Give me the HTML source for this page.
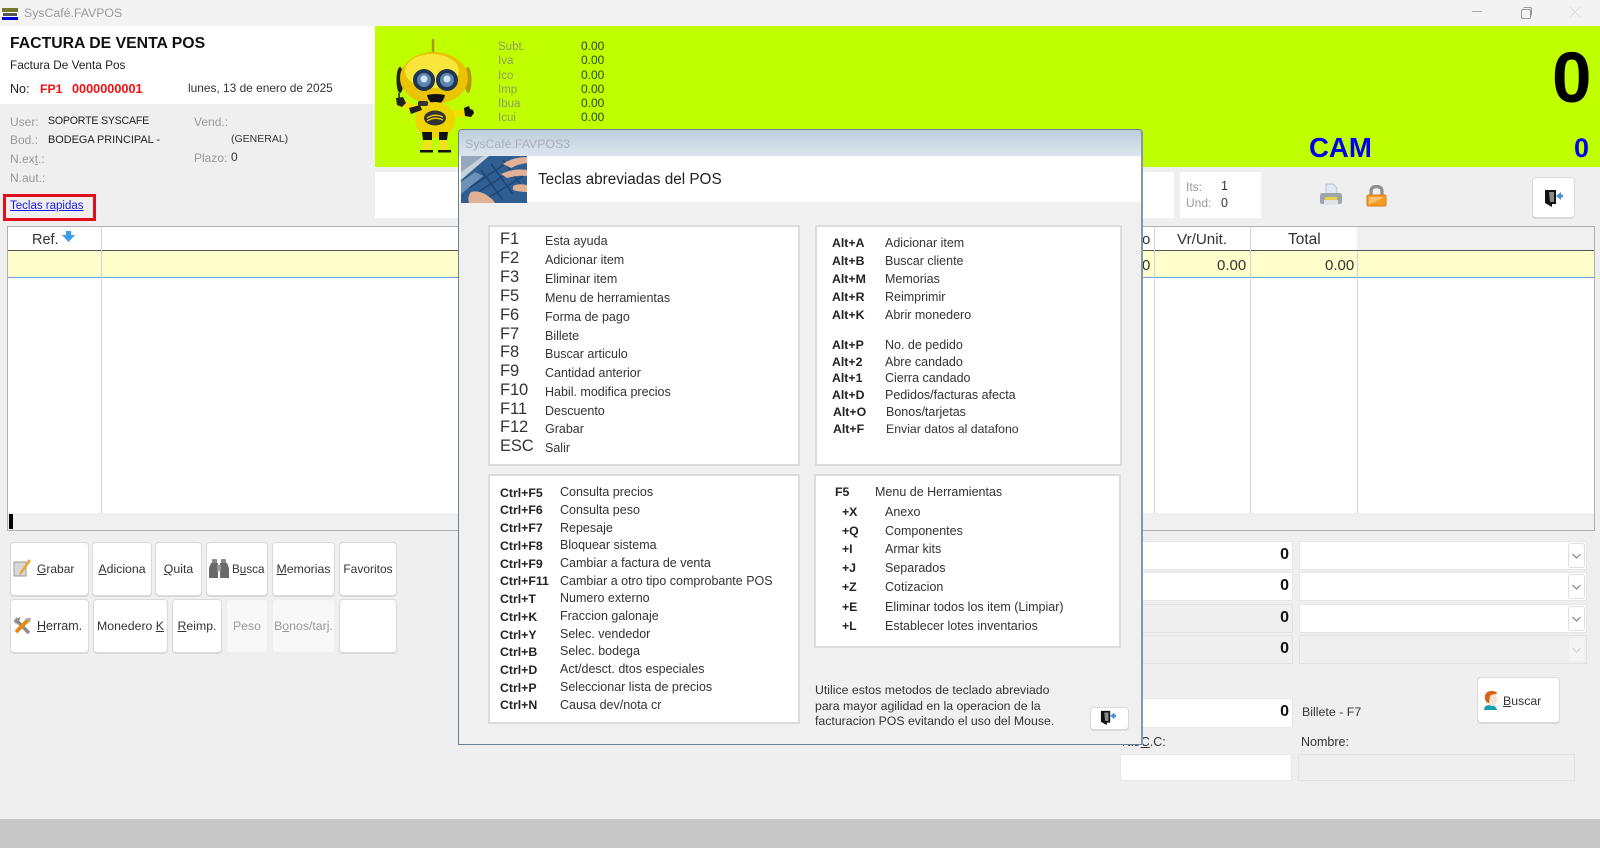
<!DOCTYPE html>
<html lang="es"><head><meta charset="utf-8"><title>SysCafé.FAVPOS</title>
<style>
html,body{margin:0;padding:0;background:#efefef}
body{width:1600px;height:848px;position:relative;overflow:hidden;font-family:"Liberation Sans",sans-serif;font-size:12.5px;color:#333}
#r{position:absolute;left:0;top:0;width:1600px;height:848px;background:#efefef;overflow:hidden;filter:blur(.3px)}
div,svg{position:absolute}
.t{position:absolute;line-height:16px;white-space:nowrap}
.g{color:#999}.b{font-weight:bold;color:#222;font-size:12.3px}
.k{font-size:16.5px;color:#333;letter-spacing:-.1px}
.btn{background:#fff;border:1px solid #dadada;border-radius:4px;box-sizing:border-box;box-shadow:0 1px 0 #d8d8d8}
.dis{background:#f8f8f8;box-shadow:none;border-color:#eee}
.lbl{position:absolute;left:0;right:0;top:50%;margin-top:-8px;line-height:16px;text-align:center;white-space:nowrap;color:#333;font-size:12.3px}
.p{background:#fff;border:2px solid #dcdcdc;box-sizing:border-box}
.in{box-sizing:border-box;border:1px solid #e6e6e6;background:#fff}
.gr{background:#efefef;border:1px solid #e2e2e2}
.num{position:absolute;right:3px;top:50%;margin-top:-10px;font-weight:bold;font-size:16px;line-height:18px;color:#111}
.dd{box-sizing:border-box;background:#fff;border:1px solid #e0e0e0;border-radius:3px}
.v{background:#ccd3da;width:1px}
.lb{font-size:11.5px;color:#8f9c62}
.val{font-size:12px;color:#2f4a00}
</style></head><body><div id="r">

<!-- title bar -->
<div style="left:0;top:0;width:1600px;height:26px;background:#f3f3f3"></div>
<div style="left:2px;top:8px;width:16px;height:4px;background:#77772a"></div>
<div style="left:2px;top:12px;width:16px;height:5px;background:#fff"></div>
<div style="left:3px;top:13px;width:14px;height:3px;background:#555"></div>
<div style="left:2px;top:17px;width:16px;height:3px;background:#0000d8"></div>
<span class="t" style="left:24px;top:5px;color:#9a9a9a;font-size:12.3px">SysCafé.FAVPOS</span>
<div style="left:1472px;top:11px;width:10px;height:1px;background:#aaa"></div>
<div style="left:1521px;top:9px;width:8px;height:8px;border:1px solid #999;border-radius:2px"></div>
<div style="left:1523px;top:7px;width:8px;height:8px;border-top:1px solid #999;border-right:1px solid #999;border-radius:2px"></div>
<svg style="left:1570px;top:7px" width="10" height="10"><path d="M0 0L10 10M10 0L0 10" stroke="#ddd" stroke-width="1"/></svg>

<!-- header left -->
<div style="left:0;top:26px;width:375px;height:78px;background:#fff"></div>
<span class="t" style="left:10px;top:36px;font-size:15.8px;font-weight:bold;color:#111">FACTURA DE VENTA POS</span>
<span class="t" style="left:10px;top:57px;font-size:11.8px;color:#222">Factura De Venta Pos</span>
<span class="t" style="left:10px;top:81px;font-size:12.5px;color:#222">No:</span>
<span class="t" style="left:40px;top:81px;font-size:12.2px;font-weight:bold;color:#f01010">FP1</span>
<span class="t" style="left:72px;top:81px;font-size:12.7px;font-weight:bold;color:#f01010">0000000001</span>
<span class="t" style="left:188px;top:80px;font-size:11.9px;color:#333">lunes, 13 de enero de 2025</span>

<span class="t g" style="left:10px;top:114px;font-size:12px">User:</span>
<span class="t" style="left:48px;top:113px;font-size:10.6px;letter-spacing:-.2px;color:#222">SOPORTE SYSCAFE</span>
<span class="t g" style="left:194px;top:114px;font-size:12px">Vend.:</span>
<span class="t g" style="left:10px;top:132px;font-size:12px">Bod.:</span>
<span class="t" style="left:48px;top:132px;font-size:10.9px;color:#222">BODEGA PRINCIPAL -</span>
<span class="t" style="left:231px;top:131px;font-size:10.5px;color:#333">(GENERAL)</span>
<span class="t g" style="left:10px;top:151px;font-size:12px">N.ex<u>t</u>.:</span>
<span class="t g" style="left:194px;top:150px;font-size:12px">Plazo:</span>
<span class="t" style="left:231px;top:149px;font-size:12px;color:#333">0</span>
<span class="t g" style="left:10px;top:170px;font-size:12px">N.aut.:</span>

<div style="left:3px;top:194px;width:93px;height:27px;border:3px solid #e2101e;box-sizing:border-box"></div>
<span class="t" style="left:10px;top:198px;font-size:11.5px;color:#1a1aee;text-decoration:underline">Teclas rapidas</span>

<!-- green -->
<div style="left:375px;top:26px;width:1225px;height:141px;background:#bfff00"></div>
<svg style="left:395px;top:38px" width="80" height="118" viewBox="0 0 80 118">
 <path d="M38 1v13" stroke="#a89a10" stroke-width="2.500"/><path d="M27 17q11-4 22 0" stroke="#222" stroke-width="2" fill="none"/>
 <ellipse cx="5" cy="42" rx="3.500" ry="13" fill="#222"/><ellipse cx="73" cy="42" rx="3.500" ry="13" fill="#b89a00"/>
 <path d="M4 55q0 6 1 9" stroke="#222" stroke-width="1.500" fill="none"/>
 <path d="M7 63q10 12 24 3" stroke="#f4e000" stroke-width="7" fill="none"/>
 <path d="M1 60l7-1 3 6-4 4-5-2z" fill="#222"/>
 <ellipse cx="39" cy="40" rx="34" ry="26" fill="#eac400"/><ellipse cx="37" cy="33" rx="27" ry="17" fill="#f8e63c"/>
 <circle cx="29" cy="42" r="11" fill="#1f3552"/><circle cx="29" cy="42" r="7" fill="#5d86b0"/><circle cx="29" cy="41" r="3.500" fill="#cfe6f4"/>
 <circle cx="52" cy="42" r="11" fill="#1f3552"/><circle cx="52" cy="42" r="7" fill="#5d86b0"/><circle cx="52" cy="41" r="3.500" fill="#cfe6f4"/>
 <path d="M32 57q9-2 18 0q-2 9-9 9t-9-9z" fill="#111"/>
 <path d="M56 76l16-1" stroke="#f4e000" stroke-width="7"/>
 <ellipse cx="40" cy="82" rx="20" ry="18" fill="#f0d400"/><ellipse cx="40" cy="80" rx="11" ry="7.500" fill="#333"/><path d="M32 80q8-5 16-1M32 83q8-5 16-1" stroke="#e6c600" stroke-width="1.500" fill="none"/>
 <rect x="23" y="63" width="10" height="5" rx="2" fill="#333"/>
 <path d="M14 70l11-3 2 5-11 4z" fill="#222"/>
 <path d="M69 70l5-2 1 3 3 1 1 3-3 4-6-1z" fill="#111"/>
 <path d="M27 94h10v8H28zM44 94h9l-1 8h-8z" fill="#111"/>
 <rect x="28" y="102" width="9" height="10" rx="3" fill="#f0e020"/><rect x="44" y="102" width="9" height="10" rx="3" fill="#f0e020"/>
 <rect x="25" y="112" width="13" height="2.500" fill="#111"/><rect x="43" y="112" width="13" height="2.500" fill="#111"/>
</svg>
<span class="t lb" style="left:498px;top:39px">Subt.</span><span class="t val" style="left:581px;top:38px">0.00</span>
<span class="t lb" style="left:498px;top:53px">Iva</span><span class="t val" style="left:581px;top:52px">0.00</span>
<span class="t lb" style="left:498px;top:68px">Ico</span><span class="t val" style="left:581px;top:67px">0.00</span>
<span class="t lb" style="left:498px;top:82px">Imp</span><span class="t val" style="left:581px;top:81px">0.00</span>
<span class="t lb" style="left:498px;top:96px">Ibua</span><span class="t val" style="left:581px;top:95px">0.00</span>
<span class="t lb" style="left:498px;top:110px">Icui</span><span class="t val" style="left:581px;top:109px">0.00</span>
<span class="t" style="left:1552px;top:39px;font-size:71px;line-height:80px;font-weight:bold;color:#000">0</span>
<span class="t" style="left:1309px;top:132px;font-size:27.6px;line-height:32px;font-weight:bold;color:#0000f0">CAM</span>
<span class="t" style="left:1574px;top:132px;font-size:27px;line-height:32px;font-weight:bold;color:#0000f0">0</span>

<!-- strip -->
<div style="left:375px;top:172px;width:799px;height:46px;background:#fff"></div>
<div style="left:1180px;top:172px;width:81px;height:46px;background:#fff"></div>
<span class="t g" style="left:1186px;top:179px;font-size:12px">Its:</span><span class="t" style="left:1221px;top:178px;font-size:12.5px">1</span>
<span class="t g" style="left:1186px;top:195px;font-size:12px">Und:</span><span class="t" style="left:1221px;top:195px;font-size:12.5px">0</span>
<svg style="left:1319px;top:183px" width="24" height="24" viewBox="0 0 24 24">
 <path d="M7 1h7l4 4v7H7z" fill="#dce8f6" stroke="#a9b9cc" stroke-width=".8"/>
 <path d="M3 10h18q2 0 2 3v6q0 2-2 2H3q-2 0-2-2v-6q0-3 2-3z" fill="#a0a5ab"/>
 <rect x="6" y="14" width="12" height="3" fill="#e8d04a"/><rect x="5" y="17" width="14" height="5" fill="#dfe3e7"/>
</svg>
<svg style="left:1366px;top:185px" width="21" height="22" viewBox="0 0 21 22">
 <path d="M5 10V6.500q0-5 5.500-5T16 6.500V10" fill="none" stroke="#8f8f8f" stroke-width="3.200"/>
 <rect x="1" y="10" width="19" height="11" rx="1.500" fill="#f69c22" stroke="#d87a12"/><path d="M3 12h15l-7 4-8 3z" fill="#fbc070"/>
</svg>
<div class="btn" style="left:1532px;top:177px;width:43px;height:41px"></div>
<svg style="left:1544px;top:188px" width="20" height="20" viewBox="0 0 20 20">
 <path d="M1 2h11v14H8v3L1 15z" fill="#111"/><path d="M5 4h5v10H6z" fill="#8a8a8a"/>
 <path d="M12 8l5-4v2.500h2v3h-2V12z" fill="#4a8fd0"/>
</svg>

<!-- grid -->
<div style="left:7px;top:226px;width:1588px;height:305px;box-sizing:border-box;border:1px solid #b0b0b0;background:#fff"></div>
<div style="left:1357px;top:227px;width:237px;height:23px;background:#f0f0f0"></div>
<div style="left:8px;top:250px;width:1586px;height:1px;background:#555"></div>
<div style="left:8px;top:251px;width:1586px;height:27px;background:#ffffcc;border-bottom:1px solid #6aa8d8;box-sizing:border-box"></div>
<div class="v" style="left:101px;top:227px;height:286px"></div>
<div class="v" style="left:1154px;top:227px;height:286px"></div>
<div class="v" style="left:1250px;top:227px;height:286px"></div>
<div class="v" style="left:1357px;top:251px;height:262px"></div>
<div style="left:8px;top:513px;width:1586px;height:17px;background:#f0f0f0"></div>
<div style="left:9px;top:514px;width:4px;height:15px;background:#000"></div>
<span class="t" style="left:32px;top:232px;font-size:14.5px;line-height:16px">Ref.</span>
<svg style="left:62px;top:231px" width="13" height="12" viewBox="0 0 13 12"><path d="M4 0h5v4h4L6.500 11 0 4h4z" fill="#3a9fe8"/></svg>
<span class="t" style="left:1142px;top:232px;font-size:15px">o</span>
<span class="t" style="left:1177px;top:232px;font-size:15.2px">Vr/Unit.</span>
<span class="t" style="left:1288px;top:232px;font-size:15.5px">Total</span>
<span class="t" style="left:1142px;top:258px;font-size:15px">0</span>
<span class="t" style="left:1217px;top:258px;font-size:15px">0.00</span>
<span class="t" style="left:1325px;top:258px;font-size:15px">0.00</span>

<!-- buttons -->
<div class="btn" style="left:10px;top:542px;width:79px;height:54px"><span class="t" style="left:26px;top:18px;font-size:12px"><u>G</u>rabar</span></div>
<svg style="left:13px;top:559px" width="18" height="18" viewBox="0 0 18 18"><rect x="1" y="3" width="12" height="14" fill="#d8d8d8" stroke="#999"/><path d="M16 0L7 13l-1 3 3-1.500L18 2z" fill="#e8a838"/></svg>
<div class="btn" style="left:92px;top:542px;width:60px;height:54px"><span class="lbl"><u>A</u>diciona</span></div>
<div class="btn" style="left:155px;top:542px;width:47px;height:54px"><span class="lbl"><u>Q</u>uita</span></div>
<div class="btn" style="left:206px;top:542px;width:62px;height:54px"><span class="t" style="left:25px;top:19px;font-size:11.7px">B<u>u</u>sca</span></div>
<svg style="left:209px;top:559px" width="20" height="20" viewBox="0 0 20 20"><rect x="3" y="0" width="5" height="5" rx="1" fill="#8a8a8a"/><rect x="12" y="0" width="5" height="5" rx="1" fill="#8a8a8a"/><path d="M2 4h7v15H0V9zM11 4h7l2 5v10h-9z" fill="#6a6a6a"/><rect x="8" y="6" width="4" height="6" fill="#999"/></svg>
<div class="btn" style="left:272px;top:542px;width:63px;height:54px"><span class="lbl"><u>M</u>emorias</span></div>
<div class="btn" style="left:339px;top:542px;width:58px;height:54px"><span class="lbl" style="font-size:12px">Favoritos</span></div>
<div class="btn" style="left:10px;top:599px;width:79px;height:54px"><span class="t" style="left:26px;top:18px"><u>H</u>erram.</span></div>
<svg style="left:13px;top:617px" width="18" height="18" viewBox="0 0 18 18"><path d="M3 3l13 13" stroke="#8c8c8c" stroke-width="3.500"/><path d="M1 4l3-3 2 2 1-3M1 4l2 2 3-1" fill="#999" stroke="#8c8c8c"/><path d="M15 3L3 15" stroke="#e88a10" stroke-width="4"/><path d="M12 1l5 5 1-5z" fill="#b0b0b0"/></svg>
<div class="btn" style="left:93px;top:599px;width:75px;height:54px"><span class="lbl">Monedero <u>K</u></span></div>
<div class="btn" style="left:172px;top:599px;width:50px;height:54px"><span class="lbl"><u>R</u>eimp.</span></div>
<div class="btn dis" style="left:226px;top:599px;width:42px;height:54px"><span class="lbl" style="color:#999">Peso</span></div>
<div class="btn dis" style="left:272px;top:599px;width:63px;height:54px"><span class="lbl" style="color:#999">B<u>o</u>nos/tarj.</span></div>
<div class="btn" style="left:339px;top:599px;width:58px;height:54px"></div>

<!-- right inputs -->
<div class="in" style="left:1130px;top:541px;width:163px;height:29px"><span class="num">0</span></div>
<div class="in" style="left:1130px;top:572px;width:163px;height:29px"><span class="num">0</span></div>
<div class="in gr" style="left:1130px;top:604px;width:163px;height:29px"><span class="num">0</span></div>
<div class="in gr" style="left:1130px;top:635px;width:163px;height:29px"><span class="num">0</span></div>
<div class="in" style="left:1299px;top:541px;width:288px;height:29px"></div>
<div class="in" style="left:1299px;top:572px;width:288px;height:29px"></div>
<div class="in" style="left:1299px;top:604px;width:288px;height:29px"></div>
<div class="in gr" style="left:1299px;top:635px;width:288px;height:29px"></div>
<div class="dd" style="left:1568px;top:543px;width:17px;height:25px"></div>
<div class="dd" style="left:1568px;top:574px;width:17px;height:25px"></div>
<div class="dd" style="left:1568px;top:606px;width:17px;height:25px"></div>
<div class="dd" style="left:1568px;top:637px;width:17px;height:25px;background:#f4f4f4;border-color:#eee"></div>
<svg style="left:1572px;top:553px" width="9" height="6"><path d="M.5 1l4 4 4-4" fill="none" stroke="#777"/></svg>
<svg style="left:1572px;top:584px" width="9" height="6"><path d="M.5 1l4 4 4-4" fill="none" stroke="#777"/></svg>
<svg style="left:1572px;top:616px" width="9" height="6"><path d="M.5 1l4 4 4-4" fill="none" stroke="#777"/></svg>
<svg style="left:1572px;top:647px" width="9" height="6"><path d="M.5 1l4 4 4-4" fill="none" stroke="#ccc"/></svg>
<div class="in" style="left:1130px;top:698px;width:163px;height:30px"><span class="num">0</span></div>
<span class="t" style="left:1302px;top:704px;font-size:12.4px">Billete - F7</span>
<div class="btn" style="left:1477px;top:677px;width:83px;height:46px"><span class="t" style="left:25px;top:15px;font-size:12.3px"><u>B</u>uscar</span></div>
<svg style="left:1483px;top:690px" width="16" height="20" viewBox="0 0 16 20"><path d="M1 20q0-5 6-5t7 5z" fill="#18a0b0"/><ellipse cx="9" cy="9" rx="5" ry="7" fill="#f4e2d0"/><path d="M2 9Q1 1 9 1q5 0 5 3-5 0-7 2l-1 7q-3 0-4-4z" fill="#d8621c"/></svg>
<span class="t" style="left:1122px;top:734px;font-size:12.5px">Nit/<u>C</u>.C:</span>
<span class="t" style="left:1301px;top:734px;font-size:12.5px">Nombre:</span>
<div class="in" style="left:1120px;top:754px;width:172px;height:27px"></div>
<div class="in gr" style="left:1298px;top:754px;width:277px;height:27px"></div>
<div style="left:0;top:819px;width:1600px;height:29px;background:#c8c8c8"></div>

<!-- dialog -->
<div style="left:458px;top:129px;width:685px;height:616px;box-sizing:border-box;border:1px solid #6d7f93;border-right:2px solid #8497ab;border-radius:4px 4px 0 0;background:#f0f0f0;overflow:hidden">
 <div style="left:0;top:0;width:100%;height:26px;background:linear-gradient(#bccddd,#dde6ee)"></div>
 <span class="t" style="left:6px;top:6px;font-size:12.3px;color:#a9afb5">SysCafé.FAVPOS3</span>
 <div style="left:0;top:26px;width:100%;height:46px;background:#fff"></div>
 <svg style="left:2px;top:26px" width="66" height="47" viewBox="0 0 66 47">
  <rect width="66" height="47" fill="#2f5f92"/><path d="M0 0h22L0 16z" fill="#93a9bb"/><path d="M0 16L22 0h6L0 24z" fill="#c9d2d8"/>
  <path d="M8 32L44 8M14 38L52 14M24 44L62 20M20 14l22 30M30 8l22 30M42 4l20 28" stroke="#1c4474" stroke-width="1.500"/>
  <path d="M0 26l14-10 8 4L0 38z" fill="#6f93b8"/>
  <path d="M42 8q10-7 24-7v6q-9 1-16 5zM40 18q12-6 26-4v6q-10-1-20 2zM52 30q6-3 14-1v7q-8 0-14-2zM10 36q10-3 22 8l2 3H8q-2-6 2-11z" fill="#e2b094"/>
 </svg>
 <span class="t" style="left:79px;top:40px;font-size:15.3px;line-height:20px;color:#222">Teclas abreviadas del POS</span>

 <div class="p" style="left:29px;top:95px;width:312px;height:241px"></div>
 <div class="p" style="left:356px;top:95px;width:307px;height:241px"></div>
 <div class="p" style="left:29px;top:344px;width:312px;height:250px"></div>
 <div class="p" style="left:355px;top:344px;width:307px;height:174px"></div>

 <span class="t k" style="left:41px;top:101px">F1</span><span class="t" style="left:86px;top:103px">Esta ayuda</span>
 <span class="t k" style="left:41px;top:120px">F2</span><span class="t" style="left:86px;top:122px">Adicionar item</span>
 <span class="t k" style="left:41px;top:139px">F3</span><span class="t" style="left:86px;top:141px">Eliminar item</span>
 <span class="t k" style="left:41px;top:158px">F5</span><span class="t" style="left:86px;top:160px">Menu de herramientas</span>
 <span class="t k" style="left:41px;top:177px">F6</span><span class="t" style="left:86px;top:179px">Forma de pago</span>
 <span class="t k" style="left:41px;top:196px">F7</span><span class="t" style="left:86px;top:198px">Billete</span>
 <span class="t k" style="left:41px;top:214px">F8</span><span class="t" style="left:86px;top:216px">Buscar articulo</span>
 <span class="t k" style="left:41px;top:233px">F9</span><span class="t" style="left:86px;top:235px">Cantidad anterior</span>
 <span class="t k" style="left:41px;top:252px">F10</span><span class="t" style="left:86px;top:254px">Habil. modifica precios</span>
 <span class="t k" style="left:41px;top:271px">F11</span><span class="t" style="left:86px;top:273px">Descuento</span>
 <span class="t k" style="left:41px;top:289px">F12</span><span class="t" style="left:86px;top:291px">Grabar</span>
 <span class="t k" style="left:41px;top:308px">ESC</span><span class="t" style="left:86px;top:310px">Salir</span>

 <span class="t b" style="left:373px;top:105px">Alt+A</span><span class="t" style="left:426px;top:105px">Adicionar item</span>
 <span class="t b" style="left:373px;top:123px">Alt+B</span><span class="t" style="left:426px;top:123px">Buscar cliente</span>
 <span class="t b" style="left:373px;top:141px">Alt+M</span><span class="t" style="left:426px;top:141px">Memorias</span>
 <span class="t b" style="left:373px;top:159px">Alt+R</span><span class="t" style="left:426px;top:159px">Reimprimir</span>
 <span class="t b" style="left:373px;top:177px">Alt+K</span><span class="t" style="left:426px;top:177px">Abrir monedero</span>
 <span class="t b" style="left:373px;top:207px">Alt+P</span><span class="t" style="left:426px;top:207px">No. de pedido</span>
 <span class="t b" style="left:373px;top:224px">Alt+2</span><span class="t" style="left:426px;top:224px">Abre candado</span>
 <span class="t b" style="left:373px;top:240px">Alt+1</span><span class="t" style="left:426px;top:240px">Cierra candado</span>
 <span class="t b" style="left:373px;top:257px">Alt+D</span><span class="t" style="left:426px;top:257px">Pedidos/facturas afecta</span>
 <span class="t b" style="left:374px;top:274px">Alt+O</span><span class="t" style="left:427px;top:274px">Bonos/tarjetas</span>
 <span class="t b" style="left:374px;top:291px">Alt+F</span><span class="t" style="left:427px;top:291px;font-size:12.3px">Enviar datos al datafono</span>

 <span class="t b" style="left:41px;top:355px">Ctrl+F5</span><span class="t" style="left:101px;top:354px">Consulta precios</span>
 <span class="t b" style="left:41px;top:372px">Ctrl+F6</span><span class="t" style="left:101px;top:372px">Consulta peso</span>
 <span class="t b" style="left:41px;top:390px">Ctrl+F7</span><span class="t" style="left:101px;top:390px">Repesaje</span>
 <span class="t b" style="left:41px;top:408px">Ctrl+F8</span><span class="t" style="left:101px;top:407px">Bloquear sistema</span>
 <span class="t b" style="left:41px;top:426px">Ctrl+F9</span><span class="t" style="left:101px;top:425px">Cambiar a factura de venta</span>
 <span class="t b" style="left:41px;top:443px">Ctrl+F11</span><span class="t" style="left:101px;top:443px">Cambiar a otro tipo comprobante POS</span>
 <span class="t b" style="left:41px;top:461px">Ctrl+T</span><span class="t" style="left:101px;top:460px">Numero externo</span>
 <span class="t b" style="left:41px;top:479px">Ctrl+K</span><span class="t" style="left:101px;top:478px">Fraccion galonaje</span>
 <span class="t b" style="left:41px;top:497px">Ctrl+Y</span><span class="t" style="left:101px;top:496px">Selec. vendedor</span>
 <span class="t b" style="left:41px;top:514px">Ctrl+B</span><span class="t" style="left:101px;top:513px">Selec. bodega</span>
 <span class="t b" style="left:41px;top:532px">Ctrl+D</span><span class="t" style="left:101px;top:531px">Act/desct. dtos especiales</span>
 <span class="t b" style="left:41px;top:550px">Ctrl+P</span><span class="t" style="left:101px;top:549px">Seleccionar lista de precios</span>
 <span class="t b" style="left:41px;top:567px">Ctrl+N</span><span class="t" style="left:101px;top:567px">Causa dev/nota cr</span>

 <span class="t b" style="left:376px;top:354px">F5</span><span class="t" style="left:416px;top:354px">Menu de Herramientas</span>
 <span class="t b" style="left:383px;top:374px">+X</span><span class="t" style="left:426px;top:374px">Anexo</span>
 <span class="t b" style="left:383px;top:393px">+Q</span><span class="t" style="left:426px;top:393px">Componentes</span>
 <span class="t b" style="left:383px;top:411px">+I</span><span class="t" style="left:426px;top:411px">Armar kits</span>
 <span class="t b" style="left:383px;top:430px">+J</span><span class="t" style="left:426px;top:430px">Separados</span>
 <span class="t b" style="left:383px;top:449px">+Z</span><span class="t" style="left:426px;top:449px">Cotizacion</span>
 <span class="t b" style="left:383px;top:469px">+E</span><span class="t" style="left:426px;top:469px">Eliminar todos los item (Limpiar)</span>
 <span class="t b" style="left:383px;top:488px">+L</span><span class="t" style="left:426px;top:488px">Establecer lotes inventarios</span>

 <span class="t" style="left:356px;top:552px;font-size:12.3px">Utilice estos metodos de teclado abreviado</span>
 <span class="t" style="left:356px;top:568px;font-size:12.3px">para mayor agilidad en la operacion de la</span>
 <span class="t" style="left:356px;top:583px;font-size:12.3px">facturacion POS evitando el uso del Mouse.</span>
 <div class="btn" style="left:631px;top:577px;width:39px;height:23px"></div>
 <svg style="left:641px;top:580px" width="17" height="16" viewBox="0 0 20 19">
  <path d="M1 1h11v14H8v3L1 14z" fill="#111"/><path d="M5 3h5v10H6z" fill="#8a8a8a"/>
  <path d="M12 7l5-4v2.500h2v3h-2V11z" fill="#4a8fd0"/>
 </svg>
</div>
</div></body></html>
